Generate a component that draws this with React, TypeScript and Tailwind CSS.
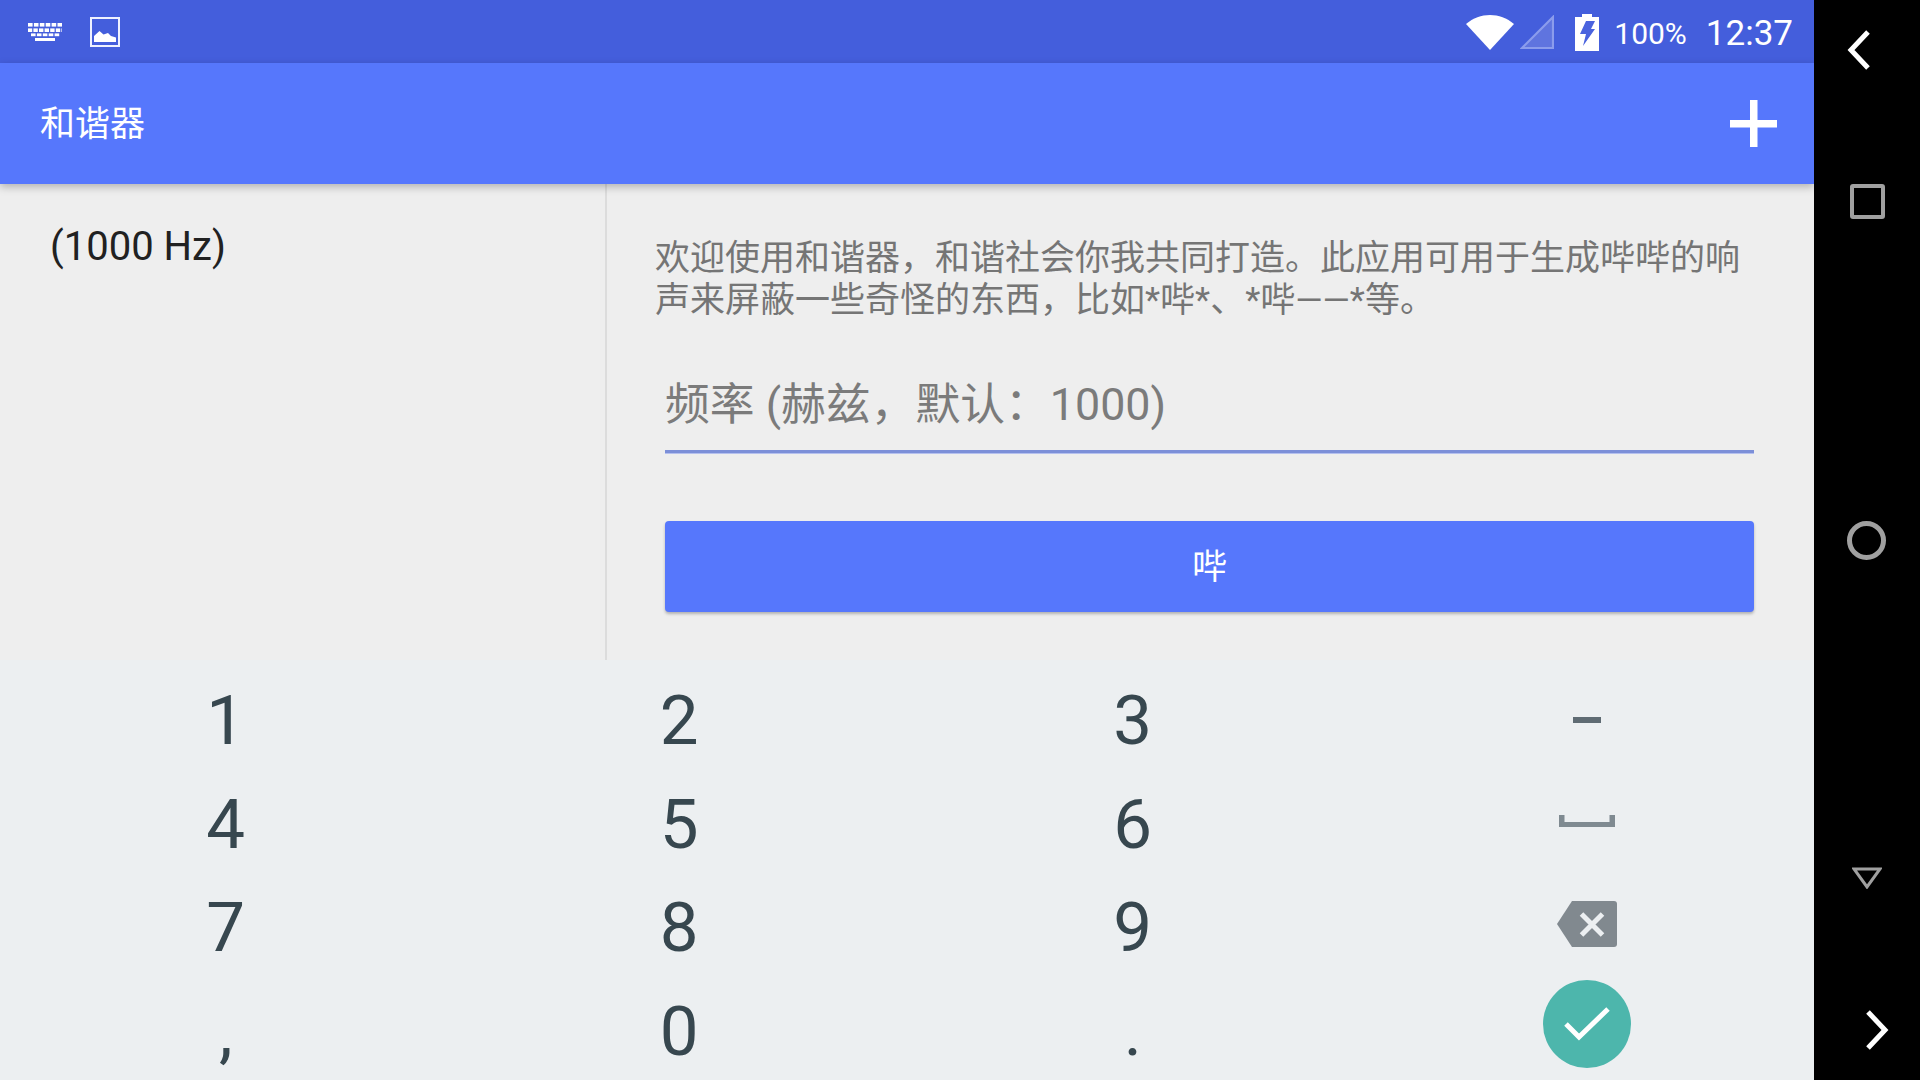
import { Fragment } from "react";

const font = { fontFamily: "Roboto, 'Noto Sans CJK SC', sans-serif" };
const digits = [
  ["1", "2", "3"],
  ["4", "5", "6"],
  ["7", "8", "9"],
  [",", "0", "."],
];

function KeyboardIcon() {
  const keys = [];
  for (let i = 0; i < 6; i++) keys.push(<rect key={`a${i}`} x={i * 5.9} y={0} width={4.6} height={3.6} />);
  for (let i = 0; i < 7; i++) keys.push(<rect key={`b${i}`} x={i * 5.6 - 0.2} y={5.4} width={4.4} height={3.6} />);
  for (let i = 0; i < 5; i++) keys.push(<rect key={`c${i}`} x={3 + i * 5.9} y={10.4} width={4.6} height={2.8} />);
  return (
    <svg width="34" height="18" viewBox="0 0 34 18" fill="white" className="mt-[1px]">
      {keys}
      <rect x="7" y="15" width="20" height="3" />
    </svg>
  );
}

function ImageIcon() {
  return (
    <svg width="30" height="30" viewBox="0 0 30 30" className="ml-[28px] mt-[1px]">
      <rect x="1" y="1" width="28" height="28" fill="none" stroke="#eef1ff" strokeWidth="2" />
      <path d="M4 25 V19 L9.5 14 L13.5 17.5 L18 16 L21 19 L26 20.5 V25 Z" fill="white" />
    </svg>
  );
}

function StatusIcons() {
  return (
    <>
      <svg width="48" height="35" viewBox="0 0 48 35" fill="white" className="mt-[1px]">
        <path d="M0 9 C14 -3 34 -3 48 9 L24 35 Z" />
      </svg>
      <svg width="34" height="34" viewBox="0 0 34 34" fill="none" className="ml-[6px] mt-[1px]">
        <path d="M2 33 L33 2 V33 Z" stroke="#8b9cec" strokeWidth="2.2" fill="#5f74df" />
      </svg>
      <svg width="24" height="37" viewBox="0 0 24 37" className="ml-[21px] mt-[1px]">
        <path d="M7 0 H17 V3 H24 V37 H0 V3 H7 Z" fill="white" />
        <path d="M11 7 H20 L16 15 H20 L8 32 L11 20 H5 Z" fill="#4a63de" />
      </svg>
    </>
  );
}

export default function App() {
  return (
    <div className="flex h-[1080px] w-[1920px] overflow-hidden bg-black" style={font}>
      <div className="flex w-[1814px] flex-col">
        <div className="flex h-[63px] shrink-0 items-center bg-[#445edc] pl-[28px] pr-[21px] text-white">
          <KeyboardIcon />
          <ImageIcon />
          <div className="ml-auto flex items-center">
            <StatusIcons />
            <span className="ml-[15px] mt-[4px] text-[30px] leading-none">100%</span>
            <span className="ml-[19px] mt-[4px] text-[35px] leading-none">12:37</span>
          </div>
        </div>

        <div className="relative z-10 flex h-[121px] shrink-0 items-center justify-between bg-[#5677fc] pl-[40px] pr-[37px] shadow-[0_3px_8px_rgba(0,0,0,0.25)]">
          <h1 className="mt-[2px] text-[35px] leading-none text-white">和谐器</h1>
          <svg width="47" height="47" viewBox="0 0 47 47" fill="white">
            <rect x="20" y="0" width="7.5" height="47" />
            <rect x="0" y="20" width="47" height="7.5" />
          </svg>
        </div>

        <div className="flex h-[476px] shrink-0 bg-[#eeeeee]">
          <div className="w-[607px] border-r-2 border-[#dcdcdc] pl-[50px] pt-[39px] text-[40px] leading-[48px] text-[#212121]">
            (1000 Hz)
          </div>
          <div className="flex-1 pl-[48px] pr-[50px]">
            <p className="pt-[54px] text-[35px] leading-[42px] text-[#757575]">
              欢迎使用和谐器，和谐社会你我共同打造。此应用可用于生成哔哔的响声来屏蔽一些奇怪的东西，比如*哔*、*哔——*等。
            </p>
            <input
              readOnly
              placeholder="频率 (赫兹，默认：1000)"
              className="ml-[10px] mt-[39px] block h-[92px] w-[1089px] border-b-[3px] border-[#7c8fd8] bg-transparent pb-[2px] text-[44.8px] shadow-[0_1px_0_#b5c0ee] outline-none placeholder:text-[#7b7b7b]"
            />
            <button className="ml-[10px] mt-[68px] flex h-[91px] w-[1089px] items-center justify-center rounded-[4px] bg-[#5677fc] pt-[4px] text-[35px] text-white shadow-[0_2px_3px_rgba(0,0,0,0.25)]">
              哔
            </button>
          </div>
        </div>

        <div className="grid h-[420px] shrink-0 grid-cols-4 grid-rows-[repeat(4,103.5px)] overflow-hidden bg-[#eceff1] pt-[8px] text-[69px] leading-none text-[#37474f]">
          {digits.map((row, index) => (
            <Fragment key={index}>
              {row.map((digit) => (
                <div key={digit} className="flex items-center justify-center pr-[2px] pt-[2px]">
                  {digit}
                </div>
              ))}
              <div className="flex items-center justify-center">
                {index === 0 && <div className="h-[6px] w-[28px] bg-[#5f6b73]" />}
                {index === 1 && (
                  <svg width="56" height="12" viewBox="0 0 56 12" fill="#7f8a91" className="mb-[4px]">
                    <path d="M0 0 H5.5 V7 H50.5 V0 H56 V12 H0 Z" />
                  </svg>
                )}
                {index === 2 && (
                  <svg width="60" height="46" viewBox="0 0 60 46" className="mb-[6px]">
                    <path d="M15 0 H57 Q60 0 60 3 V43 Q60 46 57 46 H15 L0 23 Z" fill="#81898f" />
                    <path d="M24.5 13 L45.5 34 M45.5 13 L24.5 34" stroke="#eceff1" strokeWidth="5" />
                  </svg>
                )}
                {index === 3 && (
                  <div className="mt-[-12px] flex h-[88px] w-[88px] items-center justify-center rounded-full bg-[#4db6ac]">
                    <svg width="46" height="34" viewBox="0 0 46 34" fill="none" stroke="white" strokeWidth="5">
                      <path d="M2 17 L15 30 L44 2" />
                    </svg>
                  </div>
                )}
              </div>
            </Fragment>
          ))}
        </div>
      </div>

      <nav className="flex w-[106px] flex-col">
        <svg width="24" height="40" viewBox="0 0 24 40" fill="none" stroke="white" strokeWidth="5" className="ml-[33px] mt-[30px]">
          <path d="M21 2 L4 20 L21 38" />
        </svg>
        <div className="ml-[36px] mt-[114px] h-[35px] w-[35px] rounded-[3px] border-[4px] border-[#a0a0a0]" />
        <div className="ml-[33px] mt-[302px] h-[39px] w-[39px] rounded-full border-[5px] border-[#a0a0a0]" />
        <svg width="30" height="22" viewBox="0 0 30 22" fill="none" stroke="#a0a0a0" strokeWidth="3" className="ml-[38px] mt-[307px]">
          <path d="M2 2 H28 L15 20 Z" />
        </svg>
        <svg width="24" height="40" viewBox="0 0 24 40" fill="none" stroke="white" strokeWidth="5" className="ml-[51px] mt-[121px]">
          <path d="M3 2 L20 20 L3 38" />
        </svg>
      </nav>
    </div>
  );
}
